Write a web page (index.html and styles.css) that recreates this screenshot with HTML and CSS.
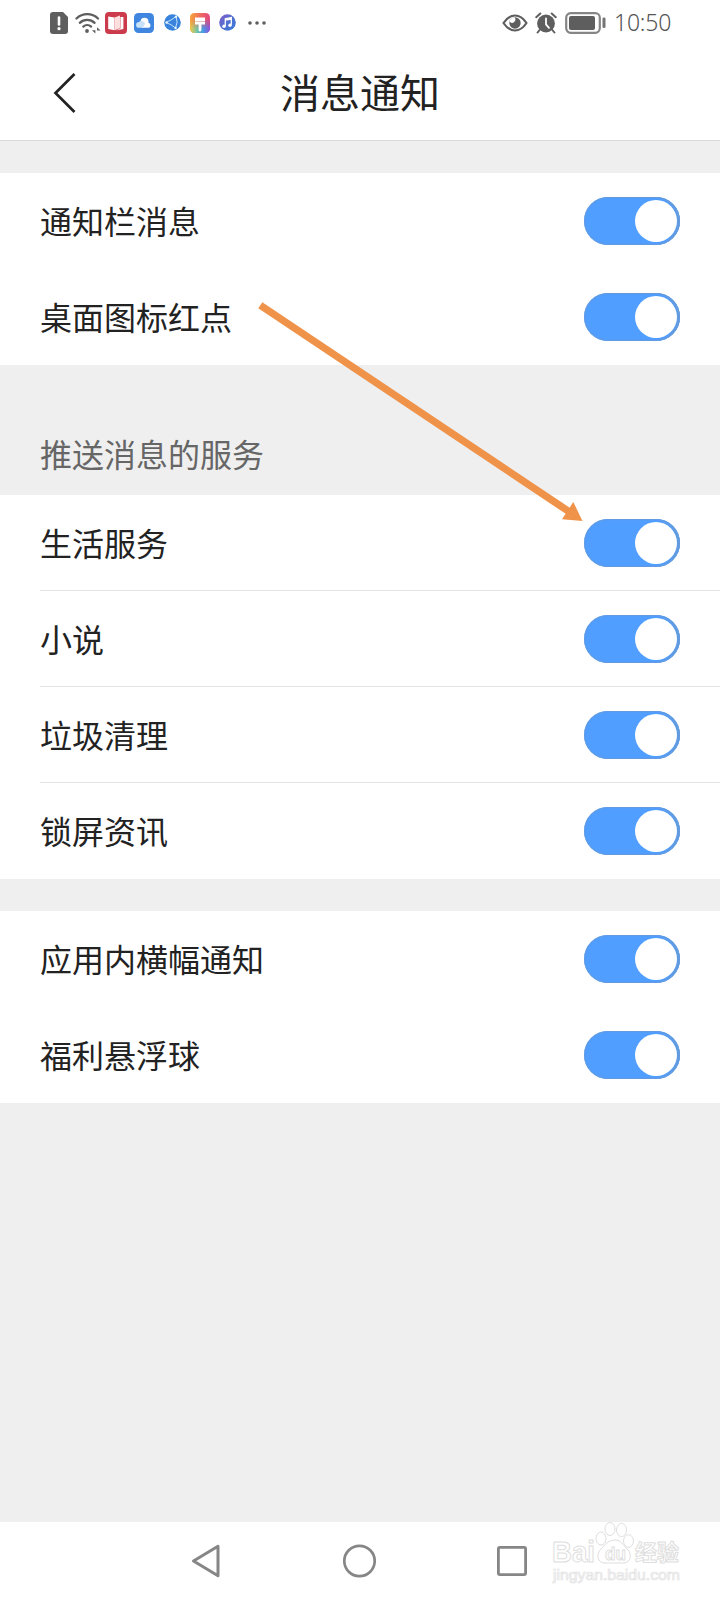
FILE: index.html
```html
<!DOCTYPE html>
<html lang="zh-CN">
<head>
  <meta charset="UTF-8">
  <meta name="viewport" content="width=device-width, initial-scale=1.0">
  <title>消息通知</title>
  <link rel="stylesheet" href="styles.css">
</head>
<body>
  <div class="screen">
    <div class="status-bar">
      <div class="status-left">
        <!-- sim warning -->
        <svg width="18" height="22" viewBox="0 0 18 22">
          <path d="M3 0h10l5 5v14a3 3 0 0 1-3 3H3a3 3 0 0 1-3-3V3a3 3 0 0 1 3-3z" fill="#5e5e5e"/>
          <path d="M9 5.5v7" stroke="#fff" stroke-width="2.6" stroke-linecap="round"/>
          <circle cx="9" cy="16.7" r="1.6" fill="#fff"/>
        </svg>
        <!-- wifi -->
        <svg class="wifi" width="26" height="22" viewBox="0 0 26 22">
          <g fill="none" stroke="#5e5e5e" stroke-width="2.3" stroke-linecap="round">
            <path d="M1.5 6.5a15.5 15.5 0 0 1 21.5 0"/>
            <path d="M4.8 10.8a10.8 10.8 0 0 1 14.8 0"/>
            <path d="M8.3 14.6a5.8 5.8 0 0 1 7.8 0"/>
          </g>
          <circle cx="12" cy="19" r="1.9" fill="#5e5e5e"/>
          <path d="M20.4 15.5v6l-3.4-3.3h3.4zM22 21.3v-6l3.6 3.3H22z" fill="#5e5e5e"/>
        </svg>
        <!-- reader -->
        <svg class="reader" width="22" height="22" viewBox="0 0 22 22">
          <rect width="22" height="22" rx="4" fill="#cb3b4b"/>
          <path d="M3.2 4.6 9.5 5.5v12.8L3.2 17z" fill="#fff"/>
          <path d="M9.5 5.5 15 3.5v12.8l-5.500 2z" fill="#ffdede"/>
          <path d="M15.400 5h3v12l-7.500 1.400 4.500-2z" fill="#fff"/>
        </svg>
        <!-- cloud -->
        <svg class="cloud" width="20" height="20" viewBox="0 0 20 20">
          <rect width="20" height="20" rx="4.500" fill="#3e86df"/>
          <circle cx="10.500" cy="8.800" r="4" fill="#fff"/>
          <path d="M5 14.800a2.900 2.900 0 0 1 0-5.800 4 4 0 0 1 6.300 2L9 14.800z" fill="#c9e2fa"/>
          <path d="M7.500 14.800c2.500-1 3-4.500 6-5.400a3 3 0 0 1 1.800 5.400z" fill="#fff"/>
        </svg>
        <!-- browser -->
        <svg class="globe" width="17" height="17" viewBox="0 0 17 17">
          <circle cx="8.500" cy="8.500" r="8.300" fill="#3983dd"/>
          <g fill="none" stroke="#c4e5fb" stroke-width="1">
            <path d="M2 8.500Q7 6.500 12 2.500M2 8.500q5 1.500 9.500 5.500M12 2.500q2.500 5.500-.5 11.500"/>
          </g>
          <g fill="#e5f5ff">
            <circle cx="2.600" cy="8.500" r="1.200"/>
            <circle cx="12" cy="2.700" r="1.200"/>
            <circle cx="11.600" cy="14" r="1.200"/>
          </g>
        </svg>
        <!-- themes -->
        <svg class="themes" width="20" height="20" viewBox="0 0 20 20">
          <defs>
            <linearGradient id="themeTop" x1="0" x2="1" y1=".4" y2=".6">
              <stop offset="0" stop-color="#f6a03c"/>
              <stop offset=".5" stop-color="#ee6565"/>
              <stop offset="1" stop-color="#df4381"/>
            </linearGradient>
            <linearGradient id="themeBottom" x1="0" x2="1">
              <stop offset="0" stop-color="#f4cb47"/>
              <stop offset=".35" stop-color="#73c6a5"/>
              <stop offset=".65" stop-color="#469be8"/>
              <stop offset="1" stop-color="#8656db"/>
            </linearGradient>
            <linearGradient id="fade" x2="0" y2="1">
              <stop offset=".3" stop-color="#000"/>
              <stop offset=".8" stop-color="#fff"/>
            </linearGradient>
            <mask id="fadeMask"><rect width="20" height="20" fill="url(#fade)"/></mask>
          </defs>
          <rect width="20" height="20" rx="4.500" fill="url(#themeTop)"/>
          <rect width="20" height="20" rx="4.500" fill="url(#themeBottom)" mask="url(#fadeMask)"/>
          <path d="M5 4.500h10v4H5z" fill="#fff"/>
          <path d="M5 9.100h10v2.400h-3.600V17a1.400 1.400 0 0 1-2.800 0v-5.500H5z" fill="#fff"/>
        </svg>
        <!-- music -->
        <svg class="music" width="17" height="17" viewBox="0 0 17 17">
          <defs>
            <linearGradient id="musicBg" x2="1" y2="1">
              <stop offset="0" stop-color="#8159c9"/>
              <stop offset=".5" stop-color="#5272cf"/>
              <stop offset="1" stop-color="#3479dc"/>
            </linearGradient>
          </defs>
          <circle cx="8.500" cy="8.500" r="8.300" fill="url(#musicBg)"/>
          <path d="M6.300 12V4.700l6-1.200v7.300M6.300 6.200l6-1.200" fill="none" stroke="#fff" stroke-width="1.300"/>
          <circle cx="5" cy="12.200" r="1.700" fill="#fff"/>
          <circle cx="11" cy="11.200" r="1.700" fill="#fff"/>
        </svg>
        <svg class="more" width="18" height="4" viewBox="0 0 18 4" fill="#5e5e5e">
          <circle cx="2" cy="2" r="1.800"/>
          <circle cx="9" cy="2" r="1.800"/>
          <circle cx="16" cy="2" r="1.800"/>
        </svg>
      </div>
      <div class="status-right">
        <!-- eye comfort -->
        <svg width="26" height="18" viewBox="0 0 26 18">
          <path d="M1.500 9Q6.500 1.500 13 1.500T24.500 9Q19.500 16.500 13 16.500T1.500 9z" fill="none" stroke="#5e5e5e" stroke-width="2.200" stroke-linejoin="round"/>
          <circle cx="13" cy="9" r="5.700" fill="#5e5e5e"/>
          <path d="M12.500 3.300a3.200 3.200 0 1 1-5 4.300q1-3.500 5-4.300z" fill="#fff"/>
        </svg>
        <!-- alarm -->
        <svg class="alarm" width="22" height="22" viewBox="0 0 22 22">
          <circle cx="11" cy="11.500" r="8.900" fill="#5e5e5e"/>
          <path d="M1.200 5.200 5.300 1.500M20.800 5.200l-4.100-3.700M4.600 18l-2 2.500M17.400 18l2 2.500" stroke="#5e5e5e" stroke-width="2" stroke-linecap="round"/>
          <path d="M11 6.300v6l3 3.500" fill="none" stroke="#fff" stroke-width="1.800" stroke-linecap="round"/>
        </svg>
        <!-- battery -->
        <svg class="battery" width="41" height="22" viewBox="0 0 41 22">
          <rect x="1.200" y="1.200" width="33.600" height="19.600" rx="4.500" fill="none" stroke="#858585" stroke-width="2.200"/>
          <rect x="4" y="4" width="26" height="14" rx="2" fill="#5e5e5e"/>
          <rect x="37.500" y="5.500" width="3" height="10.500" rx="1.200" fill="#757575"/>
        </svg>
        <span class="time">10:50</span>
      </div>
    </div>

    <div class="header">
      <svg class="back" width="24" height="42" viewBox="0 0 24 42">
        <path d="M22.500 2 3.500 21l19 19" fill="none" stroke="#222" stroke-width="2.700"/>
      </svg>
      <h1>消息通知</h1>
    </div>

    <div class="group">
      <div class="row"><span>通知栏消息</span><div class="switch"></div></div>
      <div class="row"><span>桌面图标红点</span><div class="switch"></div></div>
    </div>

    <h2 class="group-title">推送消息的服务</h2>
    <div class="group lined">
      <div class="row"><span>生活服务</span><div class="switch"></div></div>
      <div class="row"><span>小说</span><div class="switch"></div></div>
      <div class="row"><span>垃圾清理</span><div class="switch"></div></div>
      <div class="row"><span>锁屏资讯</span><div class="switch"></div></div>
    </div>

    <div class="group">
      <div class="row"><span>应用内横幅通知</span><div class="switch"></div></div>
      <div class="row"><span>福利悬浮球</span><div class="switch"></div></div>
    </div>

    <div class="nav-bar">
      <svg width="30" height="34" viewBox="0 0 30 34">
        <path d="M27 2.300v29.400L2.500 17z" fill="none" stroke="#868686" stroke-width="3" stroke-linejoin="round"/>
      </svg>
      <svg width="34" height="34" viewBox="0 0 34 34">
        <circle cx="17.500" cy="17" r="15.200" fill="none" stroke="#868686" stroke-width="2.700"/>
      </svg>
      <svg width="30" height="30" viewBox="0 0 30 30">
        <rect x="1.400" y="1.400" width="27.200" height="27.200" rx="1.500" fill="none" stroke="#868686" stroke-width="2.800"/>
      </svg>
    </div>

    <!-- arrow over the list -->
    <svg class="arrow" width="330" height="224" viewBox="0 0 330 224">
      <path d="M4.300 5.300 314 212.300" stroke="#ef924a" stroke-width="7.300"/>
      <path d="M326.500 221 317.300 202 306 219.300z" fill="#ef924a"/>
    </svg>

    <!-- watermark -->
    <svg class="watermark" width="134" height="66" viewBox="0 0 134 66">
      <g class="mark">
        <text x="4" y="42" font-size="29" textLength="43" lengthAdjust="spacingAndGlyphs">Bai</text>
        <ellipse cx="53" cy="18.500" rx="5" ry="6.500"/>
        <ellipse cx="62" cy="9" rx="5" ry="6.500"/>
        <ellipse cx="73.500" cy="10" rx="5" ry="6.500"/>
        <ellipse cx="80.500" cy="21" rx="5" ry="6.300"/>
        <path d="M67 20c6 0 8 5 12 9 5 4 5 14-4 14H57c-8 0-9-9-4-14 4-4 7-9 14-9z"/>
        <text x="57" y="39.500" font-size="19" textLength="21" lengthAdjust="spacingAndGlyphs">du</text>
        <text class="cjk" x="87" y="40.300" font-size="22">经验</text>
        <text class="url" x="5" y="59.500" font-size="14" textLength="127" lengthAdjust="spacingAndGlyphs">jingyan.baidu.com</text>
      </g>
    </svg>
  </div>
</body>
</html>
```

FILE: styles.css
```css
* {
  box-sizing: border-box;
}

body {
  margin: 0;
  background-color: #efefef;
  font-family: "Noto Sans CJK SC", sans-serif;
  color: #222;
}

svg {
  display: block;
  flex-shrink: 0;
}

.screen {
  position: relative;
  display: flex;
  flex-direction: column;
  width: 720px;
  height: 1600px;
  overflow: hidden;
}

.status-bar {
  display: flex;
  justify-content: space-between;
  height: 45px;
  padding: 0 48px 0 50px;
  background-color: #fff;
}

.status-left,
.status-right {
  display: flex;
  align-items: center;
}

.wifi {
  margin-left: 7px;
}

.reader {
  margin-left: 4px;
}

.cloud {
  margin-left: 7px;
}

.globe {
  margin-left: 10px;
}

.themes {
  margin-left: 9px;
}

.music {
  margin-left: 9px;
}

.more {
  margin-left: 12px;
}

.alarm {
  margin-left: 7px;
}

.battery {
  margin-left: 8px;
}

.time {
  width: 58px;
  margin-left: 8px;
  font-family: "Noto Sans", sans-serif;
  font-size: 23px;
  font-weight: 300;
  line-height: 45px;
  letter-spacing: -0.2px;
  color: #555;
}

.header {
  display: flex;
  align-items: center;
  height: 96px;
  padding: 0 52px;
  border-bottom: 1px solid #d9d9d9;
  background-color: #fff;
}

.header h1 {
  flex: 1;
  margin: 0 24px 0 0;
  padding-bottom: 4px;
  font-size: 40px;
  font-weight: 400;
  line-height: 60px;
  text-align: center;
}

.group {
  margin-top: 32px;
  background-color: #fff;
}

.group-title {
  height: 130px;
  margin: 0;
  padding: 64px 40px 0;
  font-size: 32px;
  font-weight: 400;
  line-height: 48px;
  color: #666;
}

.lined {
  margin-top: 0;
}

.row {
  display: flex;
  justify-content: space-between;
  align-items: center;
  height: 96px;
  margin-left: 40px;
  padding-right: 40px;
  font-size: 32px;
  line-height: 48px;
}

.row span {
  padding-bottom: 2px;
}

.lined .row:not(:last-child) {
  box-shadow: inset 0 -1px #e3e3e3;
}

.switch {
  display: flex;
  justify-content: flex-end;
  width: 96px;
  height: 48px;
  padding: 3px;
  border-radius: 24px;
  background-color: #509eff;
  box-shadow: inset -3px 0 1px #639bdf, inset 0 0 1px 1px #639bdf;
}

.switch::after {
  content: "";
  width: 42px;
  height: 42px;
  border-radius: 50%;
  background-color: #fff;
}

.nav-bar {
  display: flex;
  justify-content: space-between;
  align-items: center;
  height: 78px;
  margin-top: auto;
  padding: 0 193px 0 191px;
  background-color: #fff;
}

.arrow {
  position: absolute;
  left: 256px;
  top: 300px;
}

.watermark {
  position: absolute;
  left: 548px;
  top: 1520px;
}

.mark {
  fill: #fff;
  stroke: #dedede;
  stroke-width: 1;
  font-family: "Liberation Sans", sans-serif;
  font-weight: 700;
}

.mark .cjk {
  font-family: "Noto Sans CJK SC", sans-serif;
}

.mark .url {
  font-weight: 400;
  stroke: #e2e2e2;
  stroke-width: 0.7;
}
```
